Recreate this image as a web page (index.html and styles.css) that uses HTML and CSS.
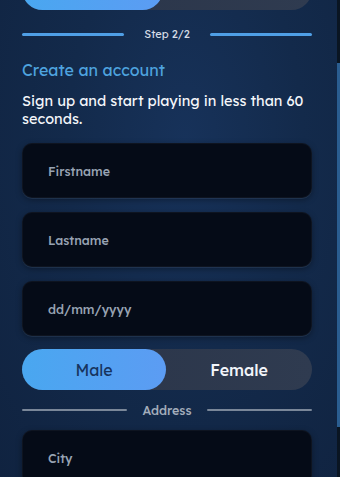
FILE: index.html
```html
<!DOCTYPE html>
<html lang="en">
<head>
<meta charset="utf-8">
<title>Create an account</title>
<link rel="stylesheet" href="styles.css">
</head>
<body>
<div class="page">
  <main class="content">
    <div class="switch switch-top">
      <div class="switch-opt active"></div>
      <div class="switch-opt"></div>
    </div>
    <div class="divider step">
      <span class="line blue"></span>
      <span class="divider-text">Step 2/2</span>
      <span class="line blue"></span>
    </div>
    <h1 class="title">Create an account</h1>
    <p class="subtitle">Sign up and start playing in less than 60 seconds.</p>
    <div class="fields">
      <div class="field"><span class="placeholder">Firstname</span></div>
      <div class="field"><span class="placeholder">Lastname</span></div>
      <div class="field"><span class="placeholder">dd/mm/yyyy</span></div>
    </div>
    <div class="switch switch-gender">
      <div class="switch-opt active">Male</div>
      <div class="switch-opt">Female</div>
    </div>
    <div class="divider address">
      <span class="line gray"></span>
      <span class="divider-text">Address</span>
      <span class="line gray"></span>
    </div>
    <div class="fields">
      <div class="field"><span class="placeholder">City</span></div>
    </div>
  </main>
  <aside class="track"><div class="thumb"></div></aside>
</div>
</body>
</html>
```

FILE: styles.css
```css
* { box-sizing: border-box; }
html, body { margin: 0; padding: 0; height: 100%; overflow: hidden; }
body {
  font-family: "Lexend", "Inter", "Noto Sans", sans-serif;
  background: #0e1d33;
  color: #fff;
}
.page {
  display: flex;
  width: 340px;
  height: 477px;
}
.content {
  flex: 1;
  padding: 0 25px 0 22px;
  background:
    radial-gradient(ellipse at 55% 30%, #17325a 0%, #132a4b 45%, #102340 100%);
  overflow: hidden;
}
.track {
  width: 3px;
  background: #0a1522;
}
.thumb {
  margin-top: 63px;
  height: 364px;
  background: #2a5d90;
}
.switch {
  display: flex;
  height: 41px;
  border-radius: 21px;
  background: linear-gradient(90deg, #2a3448, #2f3b50);
}
.switch-top { margin-top: -31px; }
.switch-opt {
  flex: 1;
  display: flex;
  align-items: center;
  justify-content: center;
  font-size: 16px;
  font-weight: 500;
  color: #f2f5fa;
  border-radius: 21px;
}
.switch-opt.active {
  flex: 0 0 144px;
  background: linear-gradient(90deg, #49a7f0, #5c9cf3);
  color: #17345e;
  font-weight: 400;
}
.switch-top .switch-opt.active { flex-basis: 141px; }
.divider {
  display: flex;
  align-items: center;
  gap: 20px;
}
.step { margin-top: 18px; height: 12px; }
.address { margin-top: 12px; height: 16px; gap: 16px; }
.line { flex: 1; height: 3px; border-radius: 2px; }
.line.blue { background: #4f9fe6; }
.line.gray { height: 2px; background: #7a8799; }
.divider-text {
  font-size: 11px;
  color: #d5dce6;
  white-space: nowrap;
}
.address .divider-text {
  font-size: 12.5px;
  font-weight: 500;
  color: #a3adbb;
}
.title {
  margin: 19px 0 0;
  font-size: 16px;
  line-height: 22px;
  font-weight: 400;
  color: #4ea3df;
}
.subtitle {
  margin: 11px 0 0;
  font-size: 14.5px;
  line-height: 18px;
  font-weight: 400;
  color: #f4f6fa;
}
.fields {
  display: flex;
  flex-direction: column;
  gap: 14px;
  margin-top: 15px;
}
.switch-gender { margin-top: 13px; }
.address + .fields { margin-top: 12px; }
.field {
  height: 55px;
  border-radius: 10px;
  background: #050b17;
  border: 1px solid rgba(255, 255, 255, 0.04);
  box-shadow: 0 1px 0 rgba(150, 180, 220, 0.12), 0 2px 6px rgba(0, 0, 0, 0.35);
  display: flex;
  align-items: center;
  padding-left: 25px;
}
.placeholder {
  font-size: 12.5px;
  font-weight: 500;
  color: #98a3b3;
}
```
